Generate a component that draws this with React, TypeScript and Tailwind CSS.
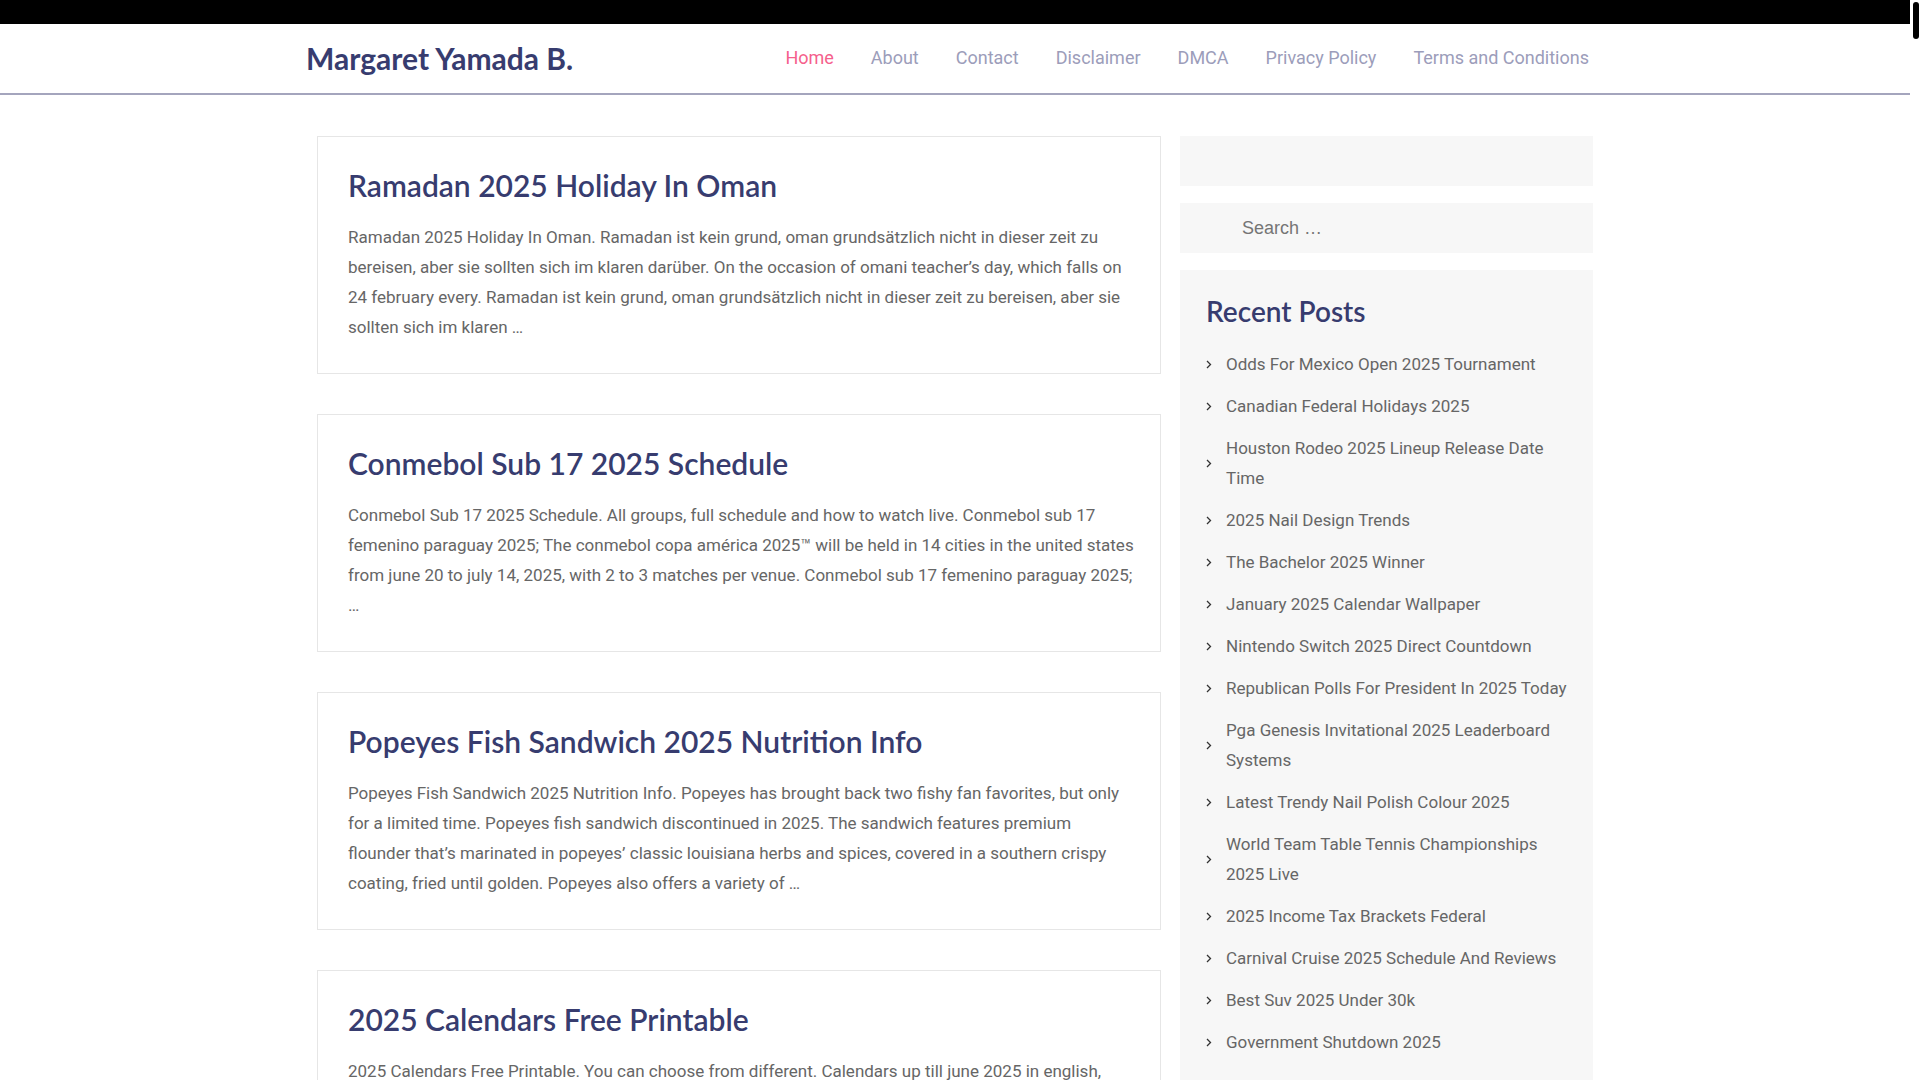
const navItems = ["Home", "About", "Contact", "Disclaimer", "DMCA", "Privacy Policy", "Terms and Conditions"];

type Post = { title: string; lines: string[] };

const posts: Post[] = [
  {
    title: "Ramadan 2025 Holiday In Oman",
    lines: [
      "Ramadan 2025 Holiday In Oman. Ramadan ist kein grund, oman grundsätzlich nicht in dieser zeit zu",
      "bereisen, aber sie sollten sich im klaren darüber. On the occasion of omani teacher’s day, which falls on",
      "24 february every. Ramadan ist kein grund, oman grundsätzlich nicht in dieser zeit zu bereisen, aber sie",
      "sollten sich im klaren …",
    ],
  },
  {
    title: "Conmebol Sub 17 2025 Schedule",
    lines: [
      "Conmebol Sub 17 2025 Schedule. All groups, full schedule and how to watch live. Conmebol sub 17",
      "femenino paraguay 2025; The conmebol copa américa 2025™ will be held in 14 cities in the united states",
      "from june 20 to july 14, 2025, with 2 to 3 matches per venue. Conmebol sub 17 femenino paraguay 2025;",
      "…",
    ],
  },
  {
    title: "Popeyes Fish Sandwich 2025 Nutrition Info",
    lines: [
      "Popeyes Fish Sandwich 2025 Nutrition Info. Popeyes has brought back two fishy fan favorites, but only",
      "for a limited time. Popeyes fish sandwich discontinued in 2025. The sandwich features premium",
      "flounder that’s marinated in popeyes’ classic louisiana herbs and spices, covered in a southern crispy",
      "coating, fried until golden. Popeyes also offers a variety of …",
    ],
  },
  {
    title: "2025 Calendars Free Printable",
    lines: [
      "2025 Calendars Free Printable. You can choose from different. Calendars up till june 2025 in english,",
      "german and french are available for download. Each printable calendar is free for personal use and",
      "can be printed on letter or a4 paper. Choose the layout that suits you best, from monthly to yearly",
      "overviews …",
    ],
  },
];

const recent: string[][] = [
  ["Odds For Mexico Open 2025 Tournament"],
  ["Canadian Federal Holidays 2025"],
  ["Houston Rodeo 2025 Lineup Release Date", "Time"],
  ["2025 Nail Design Trends"],
  ["The Bachelor 2025 Winner"],
  ["January 2025 Calendar Wallpaper"],
  ["Nintendo Switch 2025 Direct Countdown"],
  ["Republican Polls For President In 2025 Today"],
  ["Pga Genesis Invitational 2025 Leaderboard", "Systems"],
  ["Latest Trendy Nail Polish Colour 2025"],
  ["World Team Table Tennis Championships", "2025 Live"],
  ["2025 Income Tax Brackets Federal"],
  ["Carnival Cruise 2025 Schedule And Reviews"],
  ["Best Suv 2025 Under 30k"],
  ["Government Shutdown 2025"],
];

const heading = "font-['Lato',sans-serif] text-[#373c6f]";
const body = "font-['Roboto',sans-serif]";

function Chevron() {
  return (
    <svg width="6" height="9" viewBox="0 0 6 9" className="shrink-0" aria-hidden>
      <path d="M1 1l3.5 3.5L1 8" fill="none" stroke="#333" strokeWidth="1.3" />
    </svg>
  );
}

function PostCard({ post }: { post: Post }) {
  return (
    <article className="border border-[#e6e6e6] bg-white px-[30px] pt-[28px] pb-[31px]">
      <h2 className={`${heading} text-[30px] font-semibold leading-[40px]`}>{post.title}</h2>
      <p className={`${body} mt-[17px] text-[17px] leading-[30px] text-[#666]`}>
        {post.lines.map((l, i) => (
          <span key={i} className="block whitespace-nowrap">
            {l}
          </span>
        ))}
      </p>
    </article>
  );
}

export default function App() {
  return (
    <div className="flex h-screen overflow-hidden bg-white">
      <div className="min-w-0 flex-1">
        <div className="h-6 bg-black" />
        <header className="h-[71px] border-b-2 border-[#a4a5bd]">
          <div className="mx-auto flex h-full w-[1298px] items-center justify-between pb-[2px]">
            <a className={`${heading} text-[30px] font-bold leading-none`}>Margaret Yamada B.</a>
            <nav className={`${body} mr-[15px] flex gap-[37px] text-[18px]`}>
              {navItems.map((n) => (
                <a key={n} className={n === "Home" ? "text-[#f55f8d]" : "text-[#9c9dba]"}>
                  {n}
                </a>
              ))}
            </nav>
          </div>
        </header>

        <div className="mx-auto mt-[41px] flex w-[1298px] gap-[19px] px-[11px]">
          <main className="flex w-[844px] flex-col gap-[40px]">
            {posts.map((p) => (
              <PostCard key={p.title} post={p} />
            ))}
          </main>

          <aside className="flex w-[413px] flex-col gap-[17px]">
            <div className="h-[50px] bg-[#f7f7f7]" />
            <div className="flex h-[50px] items-center bg-[#f7f7f7] pl-[62px]">
              <span className="font-['Liberation_Sans',sans-serif] text-[18px] text-[#757575]">Search …</span>
            </div>
            <section className="bg-[#f7f7f7] px-[26px] pt-[25px] pb-[20px]">
              <h3 className={`${heading} text-[28px] font-semibold leading-[32px]`}>Recent Posts</h3>
              <ul className={`${body} mt-[16px] text-[17px] leading-[30px] text-[#666]`}>
                {recent.map((r) => (
                  <li key={r[0]} className="flex items-center gap-[14px] py-[6px]">
                    <Chevron />
                    <span>
                      {r.map((l) => (
                        <span key={l} className="block whitespace-nowrap">
                          {l}
                        </span>
                      ))}
                    </span>
                  </li>
                ))}
              </ul>
            </section>
          </aside>
        </div>
      </div>
      <div className="relative w-[10px] shrink-0 bg-white">
        <div className="absolute left-[3px] top-[2px] h-[37px] w-[6px] rounded-full bg-black" />
      </div>
    </div>
  );
}
